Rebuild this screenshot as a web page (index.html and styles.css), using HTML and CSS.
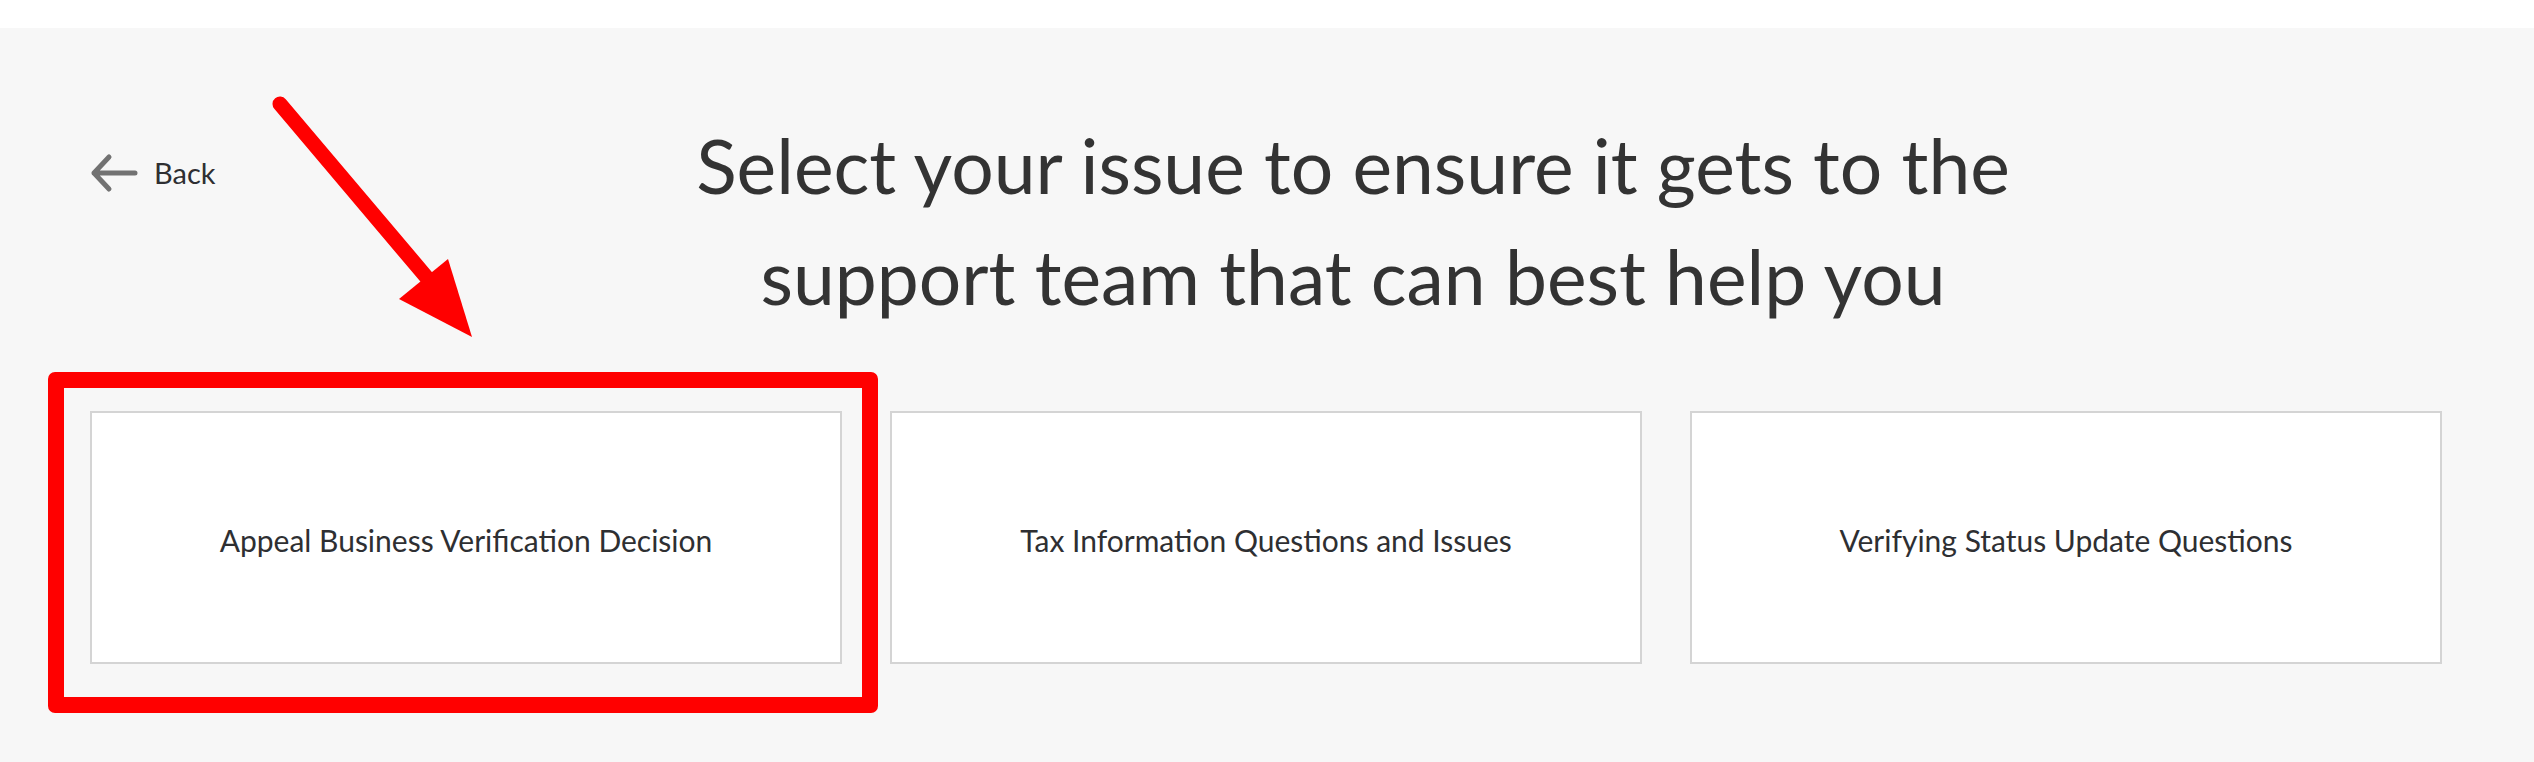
FILE: index.html
```html
<!DOCTYPE html>
<html lang="en">
<head>
<meta charset="utf-8">
<title>Select your issue</title>
<link rel="stylesheet" href="styles.css">
</head>
<body>
<div class="topbar"></div>
<main class="page">
  <div class="header">
    <a class="back" href="#">
      <svg class="back-icon" width="48" height="40" viewBox="0 0 48 40" aria-hidden="true">
        <path d="M19 4 L4 20 L19 36 M4 20 L45 20" fill="none" stroke="#727272" stroke-width="5" stroke-linecap="round" stroke-linejoin="round"/>
      </svg>
      <span class="back-label">Back</span>
    </a>
    <h1 class="title">Select your issue to ensure it gets to the<br>support team that can best help you</h1>
  </div>
  <div class="cards">
    <div class="card-wrap">
      <button class="card">Appeal Business Verification Decision</button>
      <div class="highlight"></div>
    </div>
    <div class="card-wrap">
      <button class="card">Tax Information Questions and Issues</button>
    </div>
    <div class="card-wrap">
      <button class="card">Verifying Status Update Questions</button>
    </div>
  </div>
  <svg class="annotation" width="520" height="380" viewBox="0 0 520 380" aria-hidden="true">
    <line x1="280" y1="76" x2="428" y2="251" stroke="#ff0000" stroke-width="15" stroke-linecap="round"/>
    <polygon points="448,231 399,271 472,309" fill="#ff0000"/>
  </svg>
</main>
</body>
</html>
```

FILE: styles.css
```css
* {
  box-sizing: border-box;
}

html, body {
  margin: 0;
  padding: 0;
}

body {
  background: #f7f7f7;
  font-family: Lato, "Open Sans", "Liberation Sans", sans-serif;
  color: #2e2f32;
  width: 2534px;
  height: 762px;
  overflow: hidden;
}

.topbar {
  height: 28px;
  background: #ffffff;
}

.page {
  position: relative;
  padding: 82px 92px 0 90px;
}

.header {
  display: flex;
  align-items: flex-start;
}

.back {
  flex: 0 0 174px;
  display: flex;
  align-items: center;
  gap: 16px;
  height: 40px;
  margin-top: 43px;
  text-decoration: none;
  color: #2e2f32;
}

.back-icon {
  display: block;
  flex: 0 0 auto;
}

.back-label {
  font-size: 29px;
  line-height: 36px;
}

.title {
  flex: 1;
  margin: 0;
  text-align: center;
  font-weight: 400;
  font-size: 75px;
  line-height: 111px;
  color: #333333;
}

.cards {
  display: grid;
  grid-template-columns: repeat(3, 1fr);
  gap: 48px;
  margin-top: 79px;
}

.card-wrap {
  position: relative;
}

.card {
  display: flex;
  align-items: center;
  justify-content: center;
  width: 100%;
  height: 253px;
  background: #ffffff;
  border: 2px solid #d4d4d4;
  font-family: inherit;
  font-size: 30px;
  color: #2e2f32;
  cursor: pointer;
  padding: 5px 20px 0;
}

.highlight {
  position: absolute;
  left: -42px;
  top: -39px;
  width: 830px;
  height: 341px;
  border: 16px solid #ff0000;
  border-radius: 7px;
  pointer-events: none;
}

.annotation {
  position: absolute;
  left: 0;
  top: 0;
  pointer-events: none;
}
```
